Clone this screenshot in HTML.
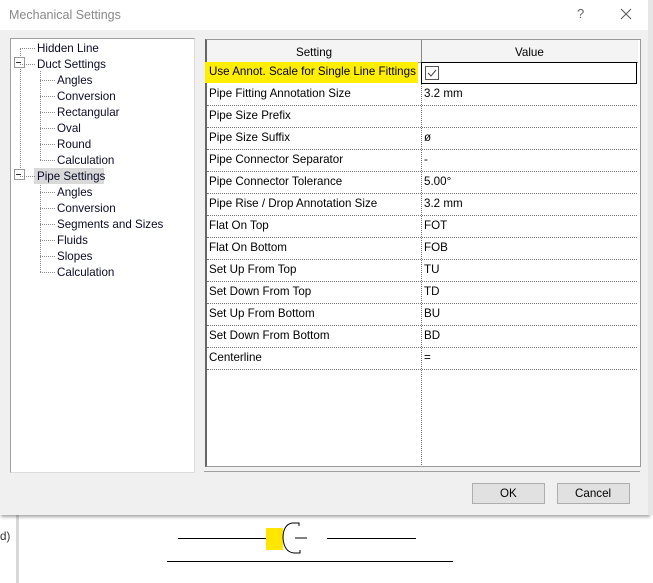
<!DOCTYPE html>
<html><head><style>
body{margin:0;width:653px;height:583px;position:relative;overflow:hidden;background:#fff;font-family:"Liberation Sans",sans-serif;font-size:11.6px;color:#000}
.a{position:absolute}
.t{position:absolute;white-space:nowrap;line-height:14px}
.row{position:absolute;left:207px;width:430px;height:21px;border-bottom:1px dotted #777}
.row span{position:absolute;top:3px;white-space:nowrap;line-height:14px}
</style></head><body>
<div class="a" style="left:0;top:515px;width:653px;height:68px;background:#fff"></div>
<div class="a" style="left:16px;top:515px;width:3px;height:68px;background:#d8d8d8"></div>
<div class="t" style="left:0;top:530px;color:#333">d)</div>
<div class="a" style="left:178px;top:538px;width:90px;height:1px;background:#000"></div>
<div class="a" style="left:266px;top:528px;width:17px;height:22px;background:#ffe600"></div>
<svg class="a" style="left:282px;top:522px" width="34" height="34"><path d="M10 1 Q1 3 1 16 Q2 30 12 31 L18 31 L18 28 M10 1 L17 1 L17 4 M13 16 L25 16" fill="none" stroke="#000" stroke-width="1"/></svg>
<div class="a" style="left:327px;top:538px;width:89px;height:1px;background:#000"></div>
<div class="a" style="left:167px;top:561px;width:286px;height:1px;background:#000"></div>
<div class="a" style="left:0;top:0;width:649px;height:515px;background:#f0f0f0;box-shadow:1px 2px 3px rgba(0,0,0,.35)"></div>
<div class="a" style="left:648px;top:0;width:5px;height:515px;background:#e6e6e6"></div>
<div class="a" style="left:0;top:0;width:648px;height:30px;background:#fff"></div>
<div class="t" style="left:9px;top:8px;color:#888;font-size:12.5px">Mechanical Settings</div>
<div class="t" style="left:577px;top:7px;color:#666;font-size:13px">?</div>
<svg class="a" style="left:620px;top:8px" width="12" height="12"><path d="M1 1L11 11M11 1L1 11" stroke="#555" stroke-width="1"/></svg>
<div class="a" style="left:10px;top:38px;width:183px;height:433px;background:#fff;border:1px solid #a0a0a0;border-right-color:#ddd;border-bottom-color:#ddd"></div>
<div class="a" style="left:20px;top:48px;height:128px;border-left:1px dotted #888"></div>
<div class="a" style="left:40px;top:71px;height:89px;border-left:1px dotted #888"></div>
<div class="a" style="left:40px;top:183px;height:89px;border-left:1px dotted #888"></div>
<div class="a" style="left:14px;top:57px;width:9px;height:9px;border:1px solid #999;background:#fff"></div>
<div class="a" style="left:16px;top:62px;width:5px;height:1px;background:#333"></div>
<div class="a" style="left:14px;top:169px;width:9px;height:9px;border:1px solid #999;background:#fff"></div>
<div class="a" style="left:16px;top:174px;width:5px;height:1px;background:#333"></div>
<div class="a" style="left:34px;top:168px;width:70px;height:16px;background:#d9d9d9"></div>
<div id="tree"></div>
<div class="a" style="left:204px;top:38px;width:436px;height:433px;border-bottom:1px solid #a0a0a0"></div>
<div class="a" style="left:205px;top:39px;width:433px;height:426px;background:#fff;border:1px solid #999;border-left:2px solid #666"></div>
<div class="a" style="left:207px;top:40px;width:431px;height:22px;background:#f4f4f4;border-bottom:1px solid #999"></div>
<div class="a" style="left:421px;top:40px;width:1px;height:22px;background:#888"></div>
<div class="a" style="left:421px;top:62px;height:403px;border-left:1px dotted #777"></div>
<div class="t" style="left:296px;top:46px">Setting</div>
<div class="t" style="left:515px;top:46px">Value</div>
<div class="a" style="left:205px;top:62px;width:213px;height:21px;background:#ffee00"></div>
<div class="a" style="left:421px;top:62px;width:214px;height:20px;border:1px solid #000"></div>
<div class="a" style="left:425px;top:66px;width:12px;height:12px;border:1px solid #555;background:#fff"></div>
<svg class="a" style="left:426px;top:67px" width="12" height="12"><path d="M2 6L5 9L10 3" fill="none" stroke="#444" stroke-width="1"/></svg>
<div id="rows"></div>
<div class="a" style="left:472px;top:483px;width:71px;height:19px;background:#e1e1e1;border:1px solid #adadad"></div>
<div class="t" style="left:500px;top:487px">OK</div>
<div class="a" style="left:557px;top:483px;width:71px;height:19px;background:#e1e1e1;border:1px solid #adadad"></div>
<div class="t" style="left:575px;top:487px">Cancel</div>
<script>
var tree=[["Hidden Line",37],["Duct Settings",37],["Angles",57],["Conversion",57],["Rectangular",57],["Oval",57],["Round",57],["Calculation",57],["Pipe Settings",37],["Angles",57],["Conversion",57],["Segments and Sizes",57],["Fluids",57],["Slopes",57],["Calculation",57]];
var h="";tree.forEach(function(e,i){var y=42+i*16;var x0=e[1]==37?20:40;h+='<div class="a" style="left:'+x0+'px;top:'+(y+6)+'px;width:'+(e[1]-x0-2)+'px;border-top:1px dotted #888"></div><div class="t" style="left:'+e[1]+'px;top:'+y+'px;color:#0a0a28">'+e[0]+'</div>';});
document.getElementById("tree").innerHTML=h;
var rows=[["Use Annot. Scale for Single Line Fittings",""],["Pipe Fitting Annotation Size","3.2 mm"],["Pipe Size Prefix",""],["Pipe Size Suffix","ø"],["Pipe Connector Separator","-"],["Pipe Connector Tolerance","5.00°"],["Pipe Rise / Drop Annotation Size","3.2 mm"],["Flat On Top","FOT"],["Flat On Bottom","FOB"],["Set Up From Top","TU"],["Set Down From Top","TD"],["Set Up From Bottom","BU"],["Set Down From Bottom","BD"],["Centerline","="]];
h="";rows.forEach(function(r,i){var y=62+i*22;h+='<div class="row" style="top:'+y+'px;'+(i==0?'border-bottom:none':'')+'"><span style="left:2px">'+r[0]+'</span><span style="left:217px">'+r[1]+'</span></div>';});
document.getElementById("rows").innerHTML=h;
</script>
</body></html>
